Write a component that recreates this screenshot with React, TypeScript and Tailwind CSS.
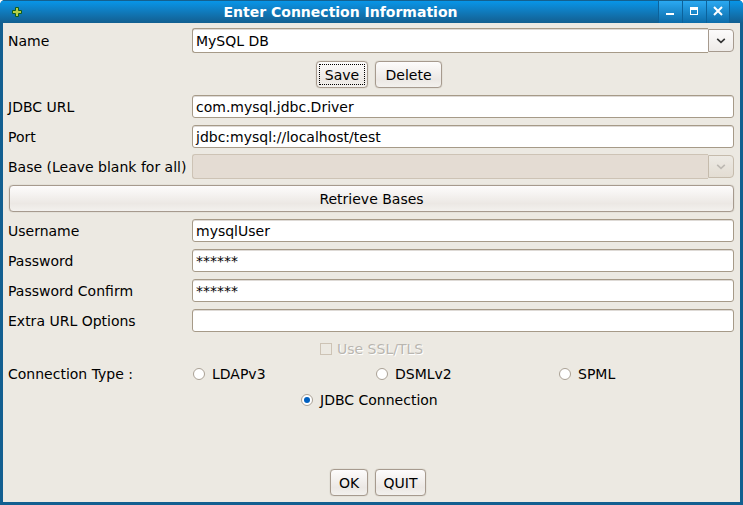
import React from "react";

const btn =
  "flex h-[27px] items-center justify-center rounded-[4px] border border-[#a69a8e] bg-linear-to-b from-[#fdfcfc] via-[#ece8e4] via-70% to-[#f3f1ee] shadow-[0_0_1px_#a69a8e] whitespace-nowrap";

function Row({ label, className, children }: { label: string; className: string; children: React.ReactNode }) {
  return (
    <div className={`flex items-center ${className}`}>
      <div className="w-[184px] shrink-0 whitespace-nowrap pl-0">{label}</div>
      {children}
    </div>
  );
}

function Field({ value }: { value: string }) {
  return (
    <div className="flex h-[23px] w-[542px] items-center rounded-[3px] border border-[#a69a88] bg-white pl-[3px] shadow-[inset_0_1px_0_#dedad6]">
      <span className="whitespace-pre">{value}</span>
    </div>
  );
}

function Chevron({ color }: { color: string }) {
  return (
    <svg width="10" height="6" viewBox="0 0 10 6" className="block">
      <path d="M1.2 .9 5 4.4 8.8 .9" fill="none" stroke={color} strokeWidth="1.6" />
    </svg>
  );
}

function Combo({ value, disabled }: { value: string; disabled?: boolean }) {
  return (
    <div className="flex h-[25px] w-[542px] items-center">
      <div
        className={`flex h-[25px] w-[516px] items-center rounded-l-[3px] border border-r-0 pl-[3px] ${
          disabled ? "border-[#cdc3b5] bg-[#e4dcd3]" : "border-[#a69a88] bg-white shadow-[inset_0_1px_0_#dedad6]"
        }`}
      >
        {value}
      </div>
      <div
        className={`flex h-[23px] w-[26px] items-center justify-center rounded-r-[4px] border bg-linear-to-b ${
          disabled ? "border-[#c5bbac] from-[#edeae4] to-[#e3ddd3]" : "border-[#a69a8e] from-[#fcfbfb] to-[#eeebe8]"
        }`}
      >
        <Chevron color={disabled ? "#bdb9b3" : "#333333"} />
      </div>
    </div>
  );
}

function Radio({ label, checked, className }: { label: string; checked?: boolean; className: string }) {
  return (
    <div className={`flex h-4 items-center whitespace-nowrap ${className}`}>
      <div className="flex size-3 items-center justify-center rounded-full border border-[#aaa195] bg-white">
        {checked && <div className="size-1.5 rounded-full bg-[#0060c0]" />}
      </div>
      <span className="ml-[7px]">{label}</span>
    </div>
  );
}

export default function App() {
  return (
    <div className="h-[505px] w-[743px] overflow-hidden bg-white">
      <div className="flex h-[505px] w-[743px] flex-col overflow-hidden rounded-t-[5px] bg-[#125f90] font-['DejaVu_Sans',sans-serif] text-[14px] leading-4 text-black">
        <div className="flex h-[23px] shrink-0 items-center border-t border-[#14608e] bg-linear-to-b from-[#0795e8] to-[#125f90]">
          <svg width="12" height="12" viewBox="0 0 12 12" className="ml-[11px]">
            <path d="M4.5 1.5h3v3h3v3h-3v3h-3v-3h-3v-3h3z" fill="#b7cf45" stroke="#0d5c22" />
          </svg>
          <div className="ml-0 w-[635px] pl-0 text-center font-bold text-white">
            <span className="whitespace-nowrap">Enter Connection Information</span>
          </div>
          <div className="flex h-[22px]">
            <div className="w-6 border-l border-[#0c629b] bg-linear-to-b from-[#2aa9f2] to-[#0c6ca9]">
              <svg width="23" height="22" shapeRendering="crispEdges">
                <rect x="7" y="12" width="8" height="2" fill="white" />
              </svg>
            </div>
            <div className="w-6 border-l border-[#0c629b] bg-linear-to-b from-[#2aa9f2] to-[#0c6ca9]">
              <svg width="23" height="22" shapeRendering="crispEdges">
                <path d="M7 6h8v8H7zM8 9v4h6V9z" fill="white" fillRule="evenodd" />
              </svg>
            </div>
            <div className="w-6 border-x border-[#0c629b] bg-linear-to-b from-[#2aa9f2] to-[#0c6ca9]">
              <svg width="22" height="22">
                <path d="m7 6 8 8m0-8-8 8" stroke="white" strokeWidth="2" />
              </svg>
            </div>
          </div>
        </div>

        <div className="mx-[3px] h-[479px] bg-[#ece9e2] pl-[5px] pt-[5px]">
          <Row label="Name" className="h-[25px]">
            <Combo value="MySQL DB" />
          </Row>
          <div className="mt-2 flex pl-[308px]">
            <div className={`${btn} w-[52px] p-[2px]`}>
              <div className="flex h-full w-full items-center justify-center border border-dotted border-black">Save</div>
            </div>
            <div className={`${btn} ml-[7px] w-[67px]`}>Delete</div>
          </div>
          <Row label="JDBC URL" className="mt-[7px] h-[23px]">
            <Field value="com.mysql.jdbc.Driver" />
          </Row>
          <Row label="Port" className="mt-[7px] h-[23px]">
            <Field value="jdbc:mysql://localhost/test" />
          </Row>
          <Row label="Base (Leave blank for all)" className="mt-1.5 h-[25px]">
            <Combo value="" disabled />
          </Row>
          <div className={`${btn} ml-px mt-1.5 w-[725px]`}>Retrieve Bases</div>
          <Row label="Username" className="mt-[7px] h-[23px]">
            <Field value="mysqlUser" />
          </Row>
          <Row label="Password" className="mt-[7px] h-[23px]">
            <Field value="******" />
          </Row>
          <Row label="Password Confirm" className="mt-[7px] h-[23px]">
            <Field value="******" />
          </Row>
          <Row label="Extra URL Options" className="mt-[7px] h-[23px]">
            <Field value="" />
          </Row>
          <div className="mt-[9px] flex h-4 items-center pl-[312px] text-[#b9b6b0] [text-shadow:1px_1px_0_white]">
            <div className="size-3 border border-[#cdc3b5]" />
            <span className="ml-[5px]">Use SSL/TLS</span>
          </div>
          <Row label="Connection Type :" className="mt-[9px] h-4">
            <Radio label="LDAPv3" className="ml-px w-[183px]" />
            <Radio label="DSMLv2" className="w-[183px]" />
            <Radio label="SPML" className="" />
          </Row>
          <Radio label="JDBC Connection" checked className="mt-2.5 pl-[293px]" />
          <div className="mt-[61px] flex gap-[7px] pl-[322px]">
            <div className={`${btn} w-[38px]`}>OK</div>
            <div className={`${btn} w-[51px]`}>QUIT</div>
          </div>
        </div>
      </div>
    </div>
  );
}
